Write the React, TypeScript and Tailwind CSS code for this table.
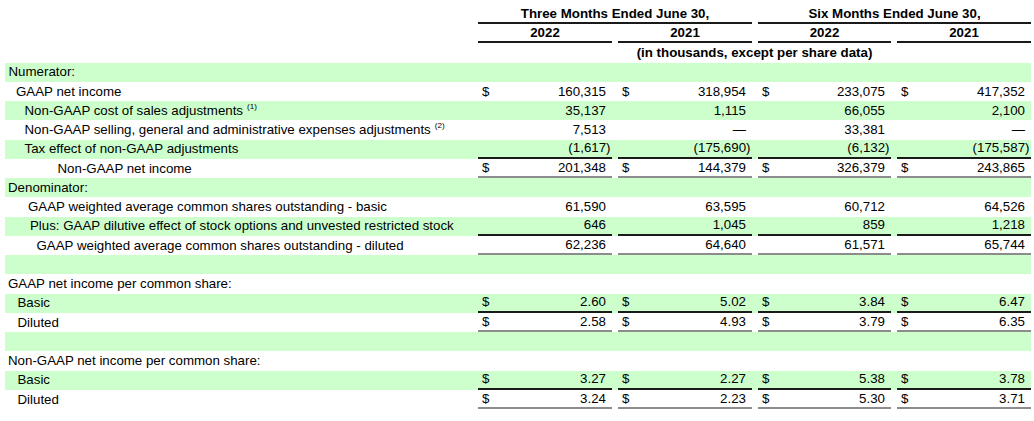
import React from "react";
import clsx from "clsx";

type Line = "single" | "double" | undefined;

type Row = {
  label?: React.ReactNode;
  indent: string;
  green?: boolean;
  dollar?: boolean;
  values?: string[];
  line?: Line;
};

const colW = ["w-[134px]", "w-[134px] ml-[6px]", "w-[133px] ml-[6px]", "w-[134px] ml-[6px]"];

const rows: Row[] = [
  { label: "Numerator:", indent: "pl-[3.5px]", green: true },
  { label: "GAAP net income", indent: "pl-[11px]", dollar: true, values: ["160,315", "318,954", "233,075", "417,352"] },
  {
    label: (
      <>
        Non-GAAP cost of sales adjustments<sup className="ml-[4px] text-[8px]">(1)</sup>
      </>
    ),
    indent: "pl-[19.5px]",
    green: true,
    values: ["35,137", "1,115", "66,055", "2,100"],
  },
  {
    label: (
      <>
        Non-GAAP selling, general and administrative expenses adjustments<sup className="ml-[4px] text-[8px]">(2)</sup>
      </>
    ),
    indent: "pl-[19.5px]",
    values: ["7,513", "—", "33,381", "—"],
  },
  { label: "Tax effect of non-GAAP adjustments", indent: "pl-[19.5px]", green: true, values: ["(1,617)", "(175,690)", "(6,132)", "(175,587)"], line: "single" },
  { label: "Non-GAAP net income", indent: "pl-[52.5px]", dollar: true, values: ["201,348", "144,379", "326,379", "243,865"], line: "double" },
  { label: "Denominator:", indent: "pl-[3px]", green: true },
  { label: "GAAP weighted average common shares outstanding - basic", indent: "pl-[23px]", values: ["61,590", "63,595", "60,712", "64,526"] },
  { label: "Plus: GAAP dilutive effect of stock options and unvested restricted stock", indent: "pl-[25px]", green: true, values: ["646", "1,045", "859", "1,218"], line: "single" },
  { label: "GAAP weighted average common shares outstanding - diluted", indent: "pl-[31.5px]", values: ["62,236", "64,640", "61,571", "65,744"], line: "double" },
  { indent: "", green: true },
  { label: "GAAP net income per common share:", indent: "pl-[3px]" },
  { label: "Basic", indent: "pl-[12.5px]", green: true, dollar: true, values: ["2.60", "5.02", "3.84", "6.47"], line: "single" },
  { label: "Diluted", indent: "pl-[12.5px]", dollar: true, values: ["2.58", "4.93", "3.79", "6.35"], line: "double" },
  { indent: "", green: true },
  { label: "Non-GAAP net income per common share:", indent: "pl-[3px]" },
  { label: "Basic", indent: "pl-[12.5px]", green: true, dollar: true, values: ["3.27", "2.27", "5.38", "3.78"], line: "single" },
  { label: "Diluted", indent: "pl-[12.5px]", dollar: true, values: ["3.24", "2.23", "5.30", "3.71"], line: "double" },
];

// negative figures hang their closing paren into the right padding
const Amount = ({ value }: { value: string }) => {
  if (value.endsWith(")")) {
    return (
      <span>
        {value.slice(0, -1)}
        <span className="-mr-[4.5px]">)</span>
      </span>
    );
  }
  return <span>{value}</span>;
};

const App = () => {
  return (
    <div className="min-h-screen bg-white pt-[4.75px] pl-[5px] text-[13.3px] leading-none text-black font-['Liberation_Sans',Arial,sans-serif]">
      {/* Header */}
      <div className="flex h-[19.25px] font-bold">
        <div className="w-[473px]" />
        <div className="flex w-[274px] items-center justify-center border-b-2 border-[#1a1a1a]">
          Three Months Ended June 30,
        </div>
        <div className="ml-[6px] flex w-[273px] items-center justify-center border-b-2 border-[#1a1a1a]">
          Six Months Ended June 30,
        </div>
      </div>

      <div className="flex h-[19.25px] font-bold">
        <div className="w-[473px]" />
        {["2022", "2021", "2022", "2021"].map((y, i) => (
          <div key={i} className={clsx("flex items-center justify-center border-b-2 border-[#1a1a1a]", colW[i])}>
            {y}
          </div>
        ))}
      </div>

      <div className="flex h-[19.25px] font-bold">
        <div className="w-[473px]" />
        <div className="flex w-[553px] items-center justify-center">(in thousands, except per share data)</div>
      </div>

      {/* Body */}
      <div className="w-[1026px]">
        {rows.map((row, r) => (
          <div key={r} className={clsx("flex h-[19.25px]", row.green && "bg-[#ccffcc]")}>
            <div className={clsx("flex w-[473px] items-center whitespace-nowrap", row.indent)}>{row.label}</div>

            {row.values &&
              row.values.map((v, i) => (
                <div
                  key={i}
                  className={clsx(
                    "flex h-full items-center justify-between pl-[4px] pr-[6px]",
                    colW[i],
                    row.line === "single" && "border-b-2 border-[#1a1a1a]",
                    row.line === "double" && "border-b-2 border-[#8c8c8c]"
                  )}
                >
                  <span>{row.dollar ? "$" : ""}</span>
                  <Amount value={v} />
                </div>
              ))}
          </div>
        ))}
      </div>
    </div>
  );
};

export default App;
